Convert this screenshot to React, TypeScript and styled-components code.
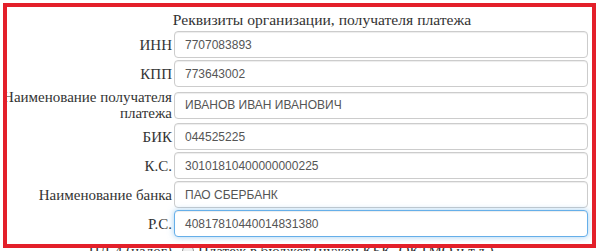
import React from 'react'
import styled, { createGlobalStyle } from 'styled-components'

const GlobalStyle = createGlobalStyle`
  html, body {
    margin: 0;
    padding: 0;
    background: #fff;
    overflow: hidden;
  }
  * {
    box-sizing: border-box;
  }
`

type Field = { label: string[]; value: string; focused?: boolean }

const fields: Field[] = [
  { label: ['ИНН'], value: '7707083893' },
  { label: ['КПП'], value: '773643002' },
  { label: ['Наименование получателя', 'платежа'], value: 'ИВАНОВ ИВАН ИВАНОВИЧ' },
  { label: ['БИК'], value: '044525225' },
  { label: ['К.С.'], value: '30101810400000000225' },
  { label: ['Наименование банка'], value: 'ПАО СБЕРБАНК' },
  { label: ['Р.С.'], value: '40817810440014831380', focused: true },
]

const App: React.FunctionComponent = () => (
  <Page>
    <GlobalStyle />
    <Title>Реквизиты организации, получателя платежа</Title>
    <Form>
      {fields.map((f) => (
        <Row key={f.value}>
          <Label>
            {f.label.map((line) => (
              <span key={line}>{line}</span>
            ))}
          </Label>
          <Input focused={f.focused}>{f.value}</Input>
        </Row>
      ))}
      <Row offset={4}>
        <Label>
          <span>ПД-4 (налог)</span>
        </Label>
        <Choice>
          <Radio />
          Платеж в бюджет (нужен КБК, ОКТМО и т.д.)
        </Choice>
      </Row>
    </Form>
    <Frame />
  </Page>
)

export default App

const Page = styled.div`
  position: relative;
  width: 600px;
  height: 251px;
  overflow: hidden;
  padding-top: 11px;
  font-family: 'Liberation Serif', 'DejaVu Serif', serif;
  font-size: 15px;
  color: #333;
`

const Title = styled.div`
  padding-left: 44px;
  height: 20px;
  line-height: 18px;
  font-size: 15.6px;
  text-align: center;
`

const Form = styled.div`
  display: flex;
  flex-direction: column;
  gap: 2px;
`

const Row = styled.div<{ offset?: number }>`
  display: grid;
  grid-template-columns: 172px 414px;
  column-gap: 2px;
  align-items: center;
  margin-top: ${({ offset }) => offset ?? 0}px;
`

const Label = styled.div`
  display: flex;
  flex-direction: column;
  align-items: flex-end;
  line-height: 16px;
  white-space: nowrap;
`

const Input = styled.div<{ focused?: boolean }>`
  height: 27px;
  padding: 0 10px;
  display: flex;
  align-items: center;
  font-family: 'Liberation Sans', Roboto, sans-serif;
  font-size: 12px;
  color: #555;
  background: #fff;
  border: 1px solid ${({ focused }) => (focused ? '#66afe9' : '#ccc')};
  border-radius: 4px;
  box-shadow: ${({ focused }) =>
    focused
      ? 'inset 0 1px 1px rgba(0,0,0,.075), 0 0 6px rgba(102,175,233,.6)'
      : 'inset 0 1px 1px rgba(0,0,0,.075)'};
`

const Choice = styled.div`
  display: flex;
  align-items: center;
  gap: 4px;
  padding-left: 8px;
  line-height: 16px;
  white-space: nowrap;
`

const Radio = styled.span`
  width: 12px;
  height: 12px;
  border-radius: 50%;
  border: 1px solid #999;
  background: #eee;
`

const Frame = styled.div`
  position: absolute;
  left: 3px;
  top: 3px;
  width: 593px;
  height: 245px;
  border: 4px solid #e3202a;
  pointer-events: none;
`
